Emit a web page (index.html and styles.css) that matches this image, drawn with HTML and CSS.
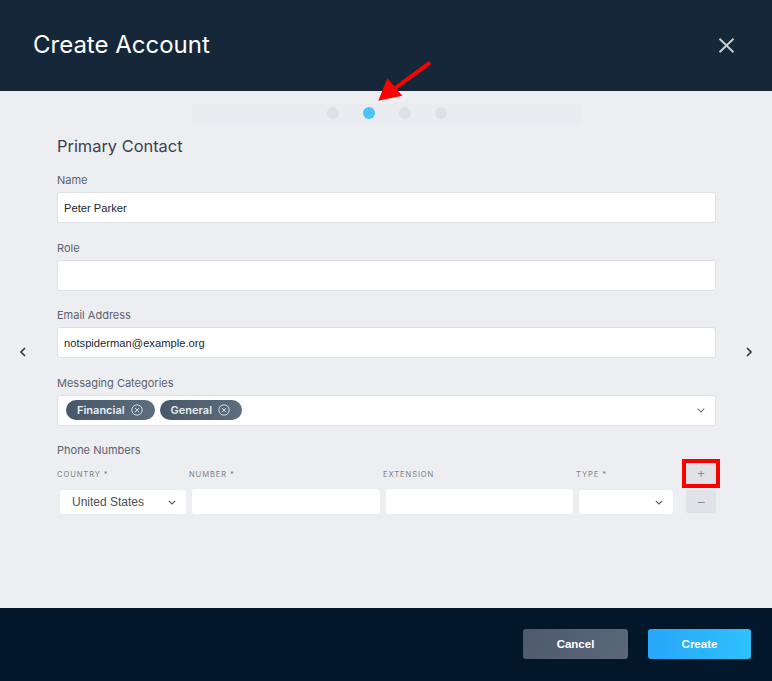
FILE: index.html
```html
<!DOCTYPE html>
<html lang="en">
<head>
<meta charset="utf-8">
<title>Create Account</title>
<link rel="stylesheet" href="styles.css">
</head>
<body>
<div class="modal">
  <header class="modal-header">
    <h1 class="modal-title">Create Account</h1>
    <button class="close-btn" aria-label="Close">
      <svg width="17" height="15" viewBox="0 0 17 15"><path d="M1.5 0.8 L15.5 14.2 M15.5 0.8 L1.5 14.2" stroke="#c9ced5" stroke-width="1.9" fill="none"/></svg>
    </button>
  </header>

  <main class="modal-body">
    <div class="nav nav-left">
      <svg width="8" height="10" viewBox="0 0 8 10"><path d="M6 1 L2 5 L6 9" stroke="#2c3340" stroke-width="1.6" fill="none"/></svg>
    </div>

    <div class="content">
      <div class="steps">
        <span class="dot"></span>
        <span class="dot active"></span>
        <span class="dot"></span>
        <span class="dot"></span>
      </div>

      <h2 class="section-title">Primary Contact</h2>

      <div class="field">
        <label class="field-label">Name</label>
        <div class="input">Peter Parker</div>
      </div>

      <div class="field">
        <label class="field-label">Role</label>
        <div class="input"></div>
      </div>

      <div class="field">
        <label class="field-label">Email Address</label>
        <div class="input">notspiderman@example.org</div>
      </div>

      <div class="field">
        <label class="field-label">Messaging Categories</label>
        <div class="input multi">
          <span class="chip">Financial
            <svg width="12" height="12" viewBox="0 0 12 12"><circle cx="6" cy="6" r="5.2" stroke="#d3d9df" stroke-width="1" fill="none"/><path d="M4 4 L8 8 M8 4 L4 8" stroke="#d3d9df" stroke-width="1" fill="none"/></svg>
          </span>
          <span class="chip">General
            <svg width="12" height="12" viewBox="0 0 12 12"><circle cx="6" cy="6" r="5.2" stroke="#d3d9df" stroke-width="1" fill="none"/><path d="M4 4 L8 8 M8 4 L4 8" stroke="#d3d9df" stroke-width="1" fill="none"/></svg>
          </span>
          <svg class="caret" width="8" height="5" viewBox="0 0 8 5"><path d="M0.7 0.7 L4 4 L7.3 0.7" stroke="#6b707a" stroke-width="1.1" fill="none"/></svg>
        </div>
      </div>

      <div class="field phones">
        <label class="field-label">Phone Numbers</label>
        <div class="phone-grid">
          <span class="col-label">Country *</span>
          <span class="col-label">Number *</span>
          <span class="col-label">Extension</span>
          <span class="col-label">Type *</span>
          <button class="icon-btn add-btn">+</button>

          <div class="select">United States
            <svg width="8" height="5" viewBox="0 0 8 5"><path d="M0.8 0.8 L4 4 L7.2 0.8" stroke="#555b66" stroke-width="1.2" fill="none"/></svg>
          </div>
          <div class="input small"></div>
          <div class="input small"></div>
          <div class="select">
            <svg width="8" height="5" viewBox="0 0 8 5"><path d="M0.8 0.8 L4 4 L7.2 0.8" stroke="#555b66" stroke-width="1.2" fill="none"/></svg>
          </div>
          <button class="icon-btn remove-btn">&minus;</button>
        </div>
      </div>
    </div>

    <div class="nav nav-right">
      <svg width="8" height="10" viewBox="0 0 8 10"><path d="M2 1 L6 5 L2 9" stroke="#2c3340" stroke-width="1.6" fill="none"/></svg>
    </div>
  </main>

  <footer class="modal-footer">
    <button class="btn btn-cancel">Cancel</button>
    <button class="btn btn-create">Create</button>
  </footer>

  <svg class="annotation-arrow" width="66" height="52" viewBox="0 0 66 52">
    <line x1="60" y1="7.7" x2="24" y2="34" stroke="#ff0000" stroke-width="4"/>
    <polygon points="8.3,45.7 17.3,23.3 32.3,40.7" fill="#ff0000"/>
  </svg>
</div>
</body>
</html>
```

FILE: styles.css
```css
* { box-sizing: border-box; }

html, body {
  margin: 0;
  padding: 0;
}

body {
  font-family: Inter, "Noto Sans", sans-serif;
  background: #edeef2;
}

.modal {
  position: relative;
  width: 772px;
  height: 681px;
  display: flex;
  flex-direction: column;
  overflow: hidden;
}

/* Header */
.modal-header {
  height: 91px;
  flex: 0 0 91px;
  background: #17273a;
  display: flex;
  justify-content: space-between;
  align-items: flex-start;
  padding: 30px 37px 0 33px;
}

.modal-title {
  margin: 0;
  font-size: 24px;
  line-height: 30px;
  font-weight: 400;
  color: #ffffff;
  letter-spacing: 0;
}

.close-btn {
  border: 0;
  background: transparent;
  padding: 0;
  margin-top: 8px;
  width: 17px;
  height: 15px;
  display: block;
}
.close-btn svg { display: block; }

/* Body */
.modal-body {
  flex: 1;
  display: flex;
  background: #edeef2;
}

.nav {
  display: flex;
  align-items: center;
  padding-top: 4px;
}
.nav-left { width: 57px; padding-left: 19px; }
.nav-right { width: 56px; padding-left: 29px; }

.content {
  width: 659px;
  display: flex;
  flex-direction: column;
}

.steps {
  width: 388px;
  height: 22px;
  margin: 12px auto 0;
  background: #e9edf1;
  display: flex;
  justify-content: center;
  align-items: flex-start;
  padding-top: 4px;
  gap: 24px;
}

.dot {
  width: 12px;
  height: 12px;
  border-radius: 50%;
  background: #dfe0e5;
}
.dot.active { background: #4cc3fb; }

.section-title {
  margin: 11px 0 0;
  font-size: 16.4px;
  line-height: 20px;
  font-weight: 400;
  color: #3a404c;
}

.field {
  display: flex;
  flex-direction: column;
}
.section-title + .field { margin-top: 17px; }
.field + .field { margin-top: 17.5px; }

.field-label {
  font-size: 11px;
  line-height: 14px;
  color: #5c616d;
  margin-bottom: 5px;
}

.input {
  height: 31px;
  background: #ffffff;
  border: 1px solid #dfe1e6;
  border-radius: 3px;
  padding: 0 6px;
  display: flex;
  align-items: center;
  font-family: "Liberation Sans", Arial, sans-serif;
  font-size: 11.2px;
  color: #23272e;
}

.input.multi {
  padding: 0 10px 0 8px;
  gap: 5px;
}
.input.multi .caret { margin-left: auto; }

.chip {
  height: 20px;
  border-radius: 10px;
  background: linear-gradient(100deg, #475768 0%, #5d6e7e 100%);
  color: #e9edf0;
  font-family: Inter, sans-serif;
  font-weight: 600;
  font-size: 11px;
  display: inline-flex;
  align-items: center;
  gap: 6px;
  padding: 0 12px 0 11px;
}
.chip svg { display: block; }

/* Phone numbers */
.phones .field-label { margin-bottom: 3px; }

.phone-grid {
  display: grid;
  grid-template-columns: 132px 194px 193px 100px 40px;
  grid-template-rows: 27px 24px;
  row-gap: 3px;
}

.col-label {
  align-self: center;
  font-size: 7.6px;
  letter-spacing: 0.9px;
  text-transform: uppercase;
  color: #7b808b;
  padding-top: 1px;
}

.icon-btn {
  border: 0;
  padding: 0;
  background: #e1e2e7;
  border-radius: 2px;
  color: #8a909b;
  font-family: "Liberation Sans", Arial, sans-serif;
  width: 30px;
  justify-self: end;
  display: flex;
  align-items: center;
  justify-content: center;
}

.add-btn {
  height: 21px;
  align-self: center;
  font-size: 13px;
  border-radius: 0;
  outline: 4px solid #ff0000;
}

.remove-btn {
  height: 23px;
  align-self: start;
  font-size: 14px;
}

.input.small {
  height: 25px;
  margin: -1px 3px 0;
  border: 0;
  border-radius: 3px;
}

.select {
  height: 24px;
  margin: 0 3px;
  background: #ffffff;
  border-radius: 3px;
  display: flex;
  align-items: center;
  justify-content: space-between;
  padding: 0 10px 0 12px;
  font-family: "Liberation Sans", Arial, sans-serif;
  font-size: 12px;
  color: #4a4f59;
}
.select svg { margin-left: auto; display: block; }

/* Footer */
.modal-footer {
  height: 73px;
  flex: 0 0 73px;
  background: #03172a;
  display: flex;
  justify-content: flex-end;
  align-items: center;
  gap: 20px;
  padding: 0 21px 1px 0;
}

.btn {
  height: 30px;
  border: 0;
  border-radius: 3px;
  color: #ffffff;
  font-family: "Liberation Sans", Arial, sans-serif;
  font-weight: 700;
  font-size: 11.5px;
}
.btn-cancel {
  width: 105px;
  background: linear-gradient(120deg, #4f596d 0%, #5a687a 100%);
}
.btn-create {
  width: 103px;
  background: linear-gradient(90deg, #28a7fb 0%, #2ec0fd 100%);
}

/* Annotation overlay */
.annotation-arrow {
  position: absolute;
  left: 370px;
  top: 55px;
  pointer-events: none;
}
```
